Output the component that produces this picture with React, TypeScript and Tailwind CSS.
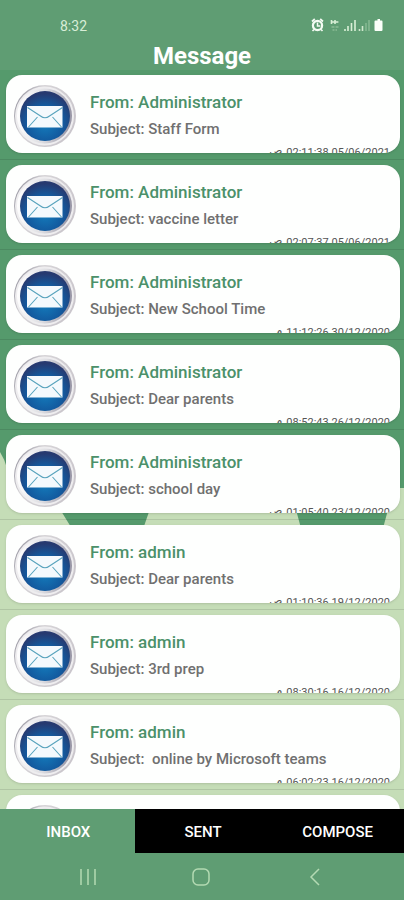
import React from "react";

type Mail = { from: string; subject: string; time: string; half: string };

const mails: Mail[] = [
  { from: "Administrator", subject: "Staff Form", time: "02:11:38 05/06/2021", half: "ص" },
  { from: "Administrator", subject: "vaccine letter", time: "02:07:37 05/06/2021", half: "ص" },
  { from: "Administrator", subject: "New School Time", time: "11:12:26 30/12/2020", half: "م" },
  { from: "Administrator", subject: "Dear parents", time: "08:52:43 26/12/2020", half: "م" },
  { from: "Administrator", subject: "school day", time: "01:05:40 23/12/2020", half: "ص" },
  { from: "admin", subject: "Dear parents", time: "01:10:36 19/12/2020", half: "ص" },
  { from: "admin", subject: "3rd prep", time: "08:30:16 16/12/2020", half: "م" },
  { from: "admin", subject: " online by Microsoft teams", time: "06:02:23 16/12/2020", half: "م" },
  { from: "admin", subject: "online", time: "05:48:10 16/12/2020", half: "م" },
];

function StatusIcons() {
  return (
    <svg className="h-4 w-[74px]" viewBox="0 0 74 16" fill="none" aria-label="Alarm, data, signal and battery">
      <circle cx="7.500" cy="7.500" r="4.6" fill="#5f9d73" stroke="#f4fbf3" strokeWidth="2.200" />
      <path d="M2 3.500 4.800 1M13 3.500 10.200 1M4 11.500 2.500 13M11 11.500 12.500 13" stroke="#f4fbf3" strokeWidth="1.7" />
      <path d="M7.500 4.500v3.500h2.800" stroke="#f4fbf3" strokeWidth="1.5" />
      <path d="M21.500 2v4M21.500 4h3M25 2v4M25 4h3.4" stroke="#d9efd6" strokeWidth="1.6" />
      <path d="M21.500 9h3M25.500 9h3M22.500 12h2M25.500 12h1.5" stroke="#a0cba5" strokeWidth="1.2" />
      <path d="M35 11v2M38 8v5" stroke="#d9efd6" strokeWidth="1.6" />
      <path d="M41.500 5v8M45 2v11" stroke="#d9efd6" strokeWidth="1.6" />
      <path d="M49.500 11v2M52.500 8v5" stroke="#cfe8cd" strokeWidth="1.6" />
      <path d="M56 5v8M59 2v11" stroke="#85b892" strokeWidth="1.6" />
      <path d="M66 2.500h1.500V1h2.500v1.500H71.500q1 0 1 1V12q0 1-1 1h-6q-1 0-1-1V3.500q0-1 1-1Z" fill="#fbfffa" />
    </svg>
  );
}

function GlyphDefs() {
  return (
    <svg className="absolute size-0" aria-hidden="true">
      <defs>
        <linearGradient id="rim" x1="0" y1="0.2" x2="1" y2="0.7">
          <stop offset="0" stopColor="#8d8c98" />
          <stop offset="0.3" stopColor="#d6d4d7" />
          <stop offset="1" stopColor="#c9c5cb" />
        </linearGradient>
        <linearGradient id="bevel" x1="0" y1="0.4" x2="1" y2="0.5">
          <stop offset="0" stopColor="#ffffff" />
          <stop offset="0.5" stopColor="#dedee2" />
          <stop offset="1" stopColor="#9694a4" />
        </linearGradient>
        <radialGradient id="disc" cx="0.5" cy="0.65" r="0.6">
          <stop offset="0" stopColor="#147dbd" />
          <stop offset="0.6" stopColor="#125a9f" />
          <stop offset="1" stopColor="#273a70" />
        </radialGradient>
      </defs>
    </svg>
  );
}

function MailBadge() {
  return (
    <svg className="size-16 shrink-0" viewBox="0 0 64 64" aria-hidden="true">
      <circle cx="31" cy="32" r="31" fill="url(#rim)" />
      <circle cx="30.500" cy="32" r="29.500" fill="#eeedef" />
      <circle cx="30.500" cy="32" r="27.500" fill="url(#bevel)" />
      <circle cx="31" cy="32" r="25" fill="url(#disc)" />
      <path d="M13 22h35.500V43.500H13Z" fill="#f4f9fd" />
      <path
        d="M13.500 23.500 26.500 32q4.500 3.500 9 0l13-8.500M14.500 43 23.500 33M47.500 43 38.500 33"
        fill="none"
        stroke="#58a3bd"
        strokeWidth="1.100"
      />
    </svg>
  );
}

function Backdrop() {
  return (
    <svg
      className="absolute inset-0 size-full"
      viewBox="0 0 404 739"
      preserveAspectRatio="xMidYMin slice"
      aria-hidden="true"
    >
      <rect width="404" height="739" fill="#c5ddb7" />
      <path d="M0 0H404V418H398Q380 436 340 440H60Q10 430 7 398Q5 390 0 382Z" fill="#559a6c" />
      <path d="M58 436H151L142 462H74ZM295 436H389L382 462H302Z" fill="#559a6c" />
    </svg>
  );
}

function MailRow({ mail }: { mail: Mail }) {
  return (
    <li className="shrink-0 border-b border-black/10 pt-[5px] pr-1 pb-[6px] pl-[6px]">
      <button
        type="button"
        className="relative flex h-[78px] w-full items-center gap-3 overflow-hidden rounded-2xl bg-[#fefffe] px-2 pt-[3px] text-left shadow-sm"
      >
        <MailBadge />
        <span className="flex flex-col gap-[3px]">
          <span className="text-[17px] leading-6 font-medium text-[#4b916a]">From: {mail.from}</span>
          <span className="text-[15px] leading-6 font-medium whitespace-pre text-[#707070]">Subject: {mail.subject}</span>
        </span>
        <span className="absolute top-[70px] right-[10px] flex gap-1 text-[11px] leading-4 text-[#555]">
          <span className="font-['DejaVu_Sans',sans-serif] leading-3">{mail.half}</span>
          {mail.time}
        </span>
      </button>
    </li>
  );
}

const tabs = ["INBOX", "SENT", "COMPOSE"];

export default function App() {
  return (
    <div className="flex h-screen flex-col overflow-hidden bg-[#5f9d73] font-[Roboto,sans-serif]">
      <GlyphDefs />
      <header className="shrink-0">
        <div className="flex items-center justify-between pt-4 pr-5 pl-[60px] text-[14px] leading-5 text-[#d8eed7]">
          <time>8:32</time>
          <StatusIcons />
        </div>
        <h1 className="pt-[6px] text-center text-[24px] leading-7 font-bold text-white">Message</h1>
      </header>

      <main className="relative min-h-0 flex-1 overflow-hidden">
        <Backdrop />
        <ul className="relative flex flex-col">
          {mails.map((mail) => (
            <MailRow key={mail.time} mail={mail} />
          ))}
        </ul>
      </main>

      <nav className="grid h-11 shrink-0 grid-cols-3 bg-black" aria-label="Mailboxes">
        {tabs.map((tab, i) => (
          <button
            key={tab}
            type="button"
            className={`pt-[2px] pl-[2px] text-[15px] font-medium text-white ${i === 0 ? "bg-[#5f9d73]" : "bg-black"}`}
          >
            {tab}
          </button>
        ))}
      </nav>

      <div className="flex h-[47px] shrink-0 items-center justify-between px-[78px] pt-px text-[#b4dab3]">
        <button type="button" aria-label="Recent apps">
          <svg className="size-5" viewBox="0 0 20 20" fill="none" stroke="currentColor" strokeWidth="1.500">
            <path d="M3 2v16M10 2v16M17 2v16" />
          </svg>
        </button>
        <button type="button" aria-label="Home">
          <svg className="size-5" viewBox="0 0 20 20" fill="none" stroke="currentColor" strokeWidth="1.500">
            <rect x="1" y="2" width="16" height="16" rx="5" />
          </svg>
        </button>
        <button type="button" aria-label="Back">
          <svg className="size-5" viewBox="0 0 20 20" fill="none" stroke="currentColor" strokeWidth="1.500">
            <path d="M13 2 5 10l8 8" />
          </svg>
        </button>
      </div>
    </div>
  );
}
